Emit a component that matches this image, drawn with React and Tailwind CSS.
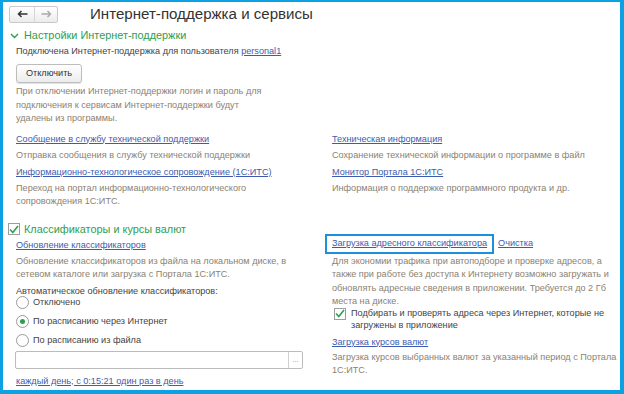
import React from 'react';

const LINK = 'text-[#3d5cb0] underline underline-offset-[1px] decoration-[#3d5cb0]';
const NOTE = 'text-[#8b8272]';

const Check = () => (
  <svg width="10" height="9" viewBox="0 0 10 9" className="block">
    <path d="M1 4.5 L3.8 7.5 L9 1" fill="none" stroke="#2e9e4e" strokeWidth="1.6" />
  </svg>
);

const Radio = ({ on, label }) => (
  <div className="flex items-center h-[19px]">
    <span className="w-[13px] h-[13px] rounded-full border border-[#9a9a9a] bg-white flex items-center justify-center">
      {on && <span className="w-[5px] h-[5px] rounded-full bg-[#2e9e4e]" />}
    </span>
    <span className="ml-[4px] text-[#444]">{label}</span>
  </div>
);

const App = () => {
  return (
    <div className="w-[624px] h-[394px] overflow-hidden bg-white border-t-2 border-l-[3px] border-r-4 border-b-4 border-[#0ba1e3] font-['Liberation_Sans',Arial,sans-serif] text-[9.15px] leading-[13px] text-[#444]">
      {/* top bar */}
      <div className="flex items-center h-[23px] pt-[1px]">
        <div className="ml-[6px] flex h-[17px] w-[49px] rounded-[2px] border border-[#c9c9c9] bg-gradient-to-b from-white to-[#ececec]">
          <div className="w-[25px] flex items-center justify-center border-r border-[#d6d6d6]">
            <svg width="11" height="8" viewBox="0 0 11 8"><path d="M10.5 4H1.5M4.5 1L1.5 4L4.5 7" fill="none" stroke="#333" strokeWidth="1.5" /></svg>
          </div>
          <div className="flex-1 flex items-center justify-center">
            <svg width="11" height="8" viewBox="0 0 11 8"><path d="M0.5 4H9.5M6.5 1L9.5 4L6.5 7" fill="none" stroke="#aaa" strokeWidth="1.5" /></svg>
          </div>
        </div>
        <div className="ml-[32px] text-[15.1px] leading-[20px] text-[#333]">Интернет-поддержка и сервисы</div>
      </div>

      {/* section 1 */}
      <div className="flex items-center h-[17px] mt-[2px] pl-[7px]">
        <svg width="9" height="6" viewBox="0 0 9 6"><path d="M1 1L4.5 4.5L8 1" fill="none" stroke="#2e9e4e" strokeWidth="1.4" /></svg>
        <span className="ml-[5px] text-[10.9px] text-[#2e9e4e]">Настройки Интернет-поддержки</span>
      </div>
      <div className="pl-[13px]">
        <div className="mt-[1px]">
          Подключена Интернет-поддержка для пользователя <span className={LINK}>personal1</span>
        </div>
        <button className="mt-[6px] h-[19px] w-[66px] rounded-[3px] border border-[#bdbdbd] bg-gradient-to-b from-white to-[#ececec] text-[#333] shadow-[0_1px_1px_rgba(0,0,0,0.12)]">
          Отключить
        </button>
        <div className={`${NOTE} mt-[2px] leading-[13.5px]`}>
          При отключении Интернет-поддержки логин и пароль для<br />
          подключения к сервисам Интернет-поддержки будут<br />
          удалены из программы.
        </div>

        <div className="grid grid-cols-[316px_1fr] mt-[7px]">
          <div>
            <div className={LINK}>Сообщение в службу технической поддержки</div>
            <div className={`${NOTE} mt-[3px]`}>Отправка сообщения в службу технической поддержки</div>
            <div className={`${LINK} mt-[4px]`}>Информационно-технологическое сопровождение (1С:ИТС)</div>
            <div className={`${NOTE} mt-[3px] leading-[13.5px]`}>
              Переход на портал информационно-технологического<br />
              сопровождения 1С:ИТС.
            </div>
          </div>
          <div>
            <div className={LINK}>Техническая информация</div>
            <div className={`${NOTE} mt-[3px]`}>Сохранение технической информации о программе в файл</div>
            <div className={`${LINK} mt-[4px]`}>Монитор Портала 1С:ИТС</div>
            <div className={`${NOTE} mt-[3px]`}>Информация о поддержке программного продукта и др.</div>
          </div>
        </div>
      </div>

      {/* section 2 */}
      <div className="flex items-center h-[17px] mt-[12px] pl-[5px]">
        <span className="w-[12px] h-[12px] border border-[#9d9d9d] bg-white flex items-center justify-center">
          <Check />
        </span>
        <span className="ml-[4px] text-[10.9px] text-[#2e9e4e]">Классификаторы и курсы валют</span>
      </div>
      <div className="pl-[13px] grid grid-cols-[316px_1fr]">
        <div>
          <div className={`${LINK} mt-[1px]`}>Обновление классификаторов</div>
          <div className={`${NOTE} mt-[3px] leading-[13.5px]`}>
            Обновление классификаторов из файла на локальном диске, в<br />
            сетевом каталоге или загрузка с Портала 1С:ИТС.
          </div>
          <div className="mt-[3px]">Автоматическое обновление классификаторов:</div>
          <div className="mt-[-5px]">
            <Radio label="Отключено" />
            <Radio on label="По расписанию через Интернет" />
            <Radio label="По расписанию из файла" />
          </div>
          <div className="mt-[1px] ml-[-1px] w-[288px] h-[18px] flex border border-[#bcbcbc] rounded-[2px] bg-white">
            <div className="flex-1" />
            <div className="w-[14px] border-l border-[#d0d0d0] flex items-center justify-center text-[7px] leading-none text-[#888]">...</div>
          </div>
          <div className={`${LINK} mt-[6px]`}>каждый день; с 0:15:21 один раз в день</div>
        </div>
        <div>
          <div className="flex items-center mt-[-4px] ml-[-7px]">
            <div className="border-2 border-[#1c8fdd] px-[5px] h-[20px] flex items-center">
              <span className={LINK}>Загрузка адресного классификатора</span>
            </div>
            <span className={`${LINK} ml-[4px]`}>Очистка</span>
          </div>
          <div className={`${NOTE} mt-[1px] leading-[13.5px]`}>
            Для экономии трафика при автоподборе и проверке адресов, а<br />
            также при работе без доступа к Интернету возможно загружать и<br />
            обновлять адресные сведения в приложении. Требуется до 2 Гб<br />
            места на диске.
          </div>
          <div className="flex mt-[-2px] ml-[2px]">
            <span className="mt-[1px] w-[12px] h-[12px] shrink-0 border border-[#9d9d9d] bg-white flex items-center justify-center">
              <Check />
            </span>
            <div className="ml-[5px] leading-[12px]">
              Подбирать и проверять адреса через Интернет, которые не<br />
              загружены в приложение
            </div>
          </div>
          <div className={`${LINK} mt-[5px]`}>Загрузка курсов валют</div>
          <div className={`${NOTE} mt-[2px] leading-[13.5px]`}>
            Загрузка курсов выбранных валют за указанный период с Портала<br />
            1С:ИТС.
          </div>
        </div>
      </div>
    </div>
  );
};

export default App;
